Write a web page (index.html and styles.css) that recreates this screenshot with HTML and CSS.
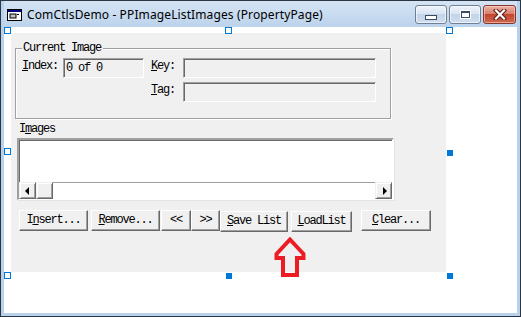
FILE: index.html
```html
<!DOCTYPE html>
<html lang="en">

<head>
    <meta charset="UTF-8">
    <title>ComCtlsDemo - PPImageListImages (PropertyPage)</title>
    <link rel="stylesheet" href="styles.css">
</head>

<body>
    <div class="window">
        <div class="titlebar">
            <svg class="app-icon" width="15" height="12" viewBox="0 0 15 12">
                <rect x="0.5" y="0.5" width="14" height="11" fill="#fff" stroke="#000"/>
                <rect x="1" y="1" width="13" height="2" fill="#000080"/>
                <rect x="3" y="5" width="6" height="4" fill="#c0c0c0" stroke="#000" stroke-width="1"/>
                <rect x="10" y="5" width="2" height="1" fill="#000"/>
            </svg>
            <span class="caption">ComCtlsDemo - PPImageListImages (PropertyPage)</span>
            <div class="caption-buttons">
                <span class="cap-btn"><i class="min-glyph"></i></span>
                <span class="cap-btn"><i class="max-glyph"></i></span>
                <span class="cap-btn close">
                    <svg width="14" height="11" viewBox="0 0 14 11">
                        <path d="M3 1.5 L11 9.5 M11 1.5 L3 9.5" stroke="#5a1a12" stroke-width="4.2" stroke-linecap="square"/>
                        <path d="M3 1.5 L11 9.5 M11 1.5 L3 9.5" stroke="#fff" stroke-width="2.2" stroke-linecap="square"/>
                    </svg>
                </span>
            </div>
        </div>

        <div class="client">
            <div class="page">
                <div class="group">
                    <div class="group-title">Current Image</div>
                    <div class="fields">
                        <span class="lbl"><u>I</u>ndex:</span>
                        <span class="edit">0 of 0</span>
                        <span class="lbl key"><u>K</u>ey:</span>
                        <span class="edit"></span>
                        <span></span>
                        <span></span>
                        <span class="lbl key"><u>T</u>ag:</span>
                        <span class="edit"></span>
                    </div>
                </div>

                <div class="images-label">I<u>m</u>ages</div>
                <div class="listbox">
                    <div class="list-area"></div>
                    <div class="hscroll">
                        <span class="sb-btn"><i class="tri-left"></i></span>
                        <span class="sb-btn thumb"></span>
                        <span class="sb-track"></span>
                        <span class="sb-btn"><i class="tri-right"></i></span>
                    </div>
                </div>

                <div class="btn-row">
                    <span class="btn w-insert">I<u>n</u>sert...</span>
                    <span class="btn w-remove"><u>R</u>emove...</span>
                    <span class="btn w-prev">&lt;&lt;</span>
                    <span class="btn w-next">&gt;&gt;</span>
                    <span class="btn w-save low"><u>S</u>ave List</span>
                    <span class="btn w-load low"><u>L</u>oadList</span>
                    <span class="btn w-clear"><u>C</u>lear...</span>
                </div>
            </div>

            <!-- selection handles of the property page -->
            <span class="handle open h-tl"></span>
            <span class="handle open h-tm"></span>
            <span class="handle open h-tr"></span>
            <span class="handle open h-ml"></span>
            <span class="handle solid h-mr"></span>
            <span class="handle open h-bl"></span>
            <span class="handle solid h-bm"></span>
            <span class="handle solid h-br"></span>

            <svg class="red-arrow" width="32" height="40" viewBox="0 0 32 40">
                <polygon points="16,2.5 29.5,17 29.5,21 23,21 23,38 9,38 9,21 2.5,21 2.5,17" fill="none" stroke="#ed1c24" stroke-width="4"/>
            </svg>
        </div>
    </div>
</body>

</html>
```

FILE: styles.css
```css
body {
    margin: 0;
    background-color: #fff;
    font-family: "Liberation Mono", "Noto Sans CJK SC", monospace;
    font-size: 12px;
    letter-spacing: -1.2px;
    color: #000;
}

.window {
    width: 521px;
    height: 317px;
    box-sizing: border-box;
    border: 1px solid #2b3644;
    background-color: #b9d1ea;
    padding: 0 3px 3px 3px;
    display: flex;
    flex-direction: column;
}

/* title bar */
.titlebar {
    height: 26px;
    flex: none;
    display: flex;
    align-items: flex-start;
    background: linear-gradient(#d5e4f4, #bcd3eb);
}

.app-icon {
    margin: 8px 0 0 3px;
}

.caption {
    margin: 5px 0 0 5px;
    font-family: "Noto Sans", "Open Sans", sans-serif;
    font-size: 12px;
    letter-spacing: 0.12px;
    line-height: 17px;
    color: #000;
}

.caption-buttons {
    margin: 4px 1px 0 auto;
    display: flex;
    gap: 2px;
}

.cap-btn {
    width: 32px;
    height: 19px;
    box-sizing: border-box;
    border: 1px solid #6f7f95;
    border-radius: 3px;
    background: linear-gradient(#eef3fa 0%, #d9e5f3 45%, #c3d4e9 50%, #cfdeef 100%);
    box-shadow: inset 0 0 0 1px rgba(255, 255, 255, 0.6);
    display: flex;
    align-items: center;
    justify-content: center;
}

.cap-btn.close {
    width: 33px;
    border-color: #84362c;
    background: linear-gradient(#eab0a4 0%, #d9806e 45%, #c4462f 50%, #d0684f 100%);
    box-shadow: inset 0 0 0 1px rgba(255, 230, 220, 0.5);
}

.min-glyph {
    width: 10px;
    height: 3px;
    margin-top: 5px;
    background-color: #fff;
    border: 1px solid #3b4a5e;
}

.max-glyph {
    width: 7px;
    height: 4px;
    border: 1px solid #3b4a5e;
    border-top-width: 2px;
    background-color: #fff;
    box-shadow: 0 0 0 1px #fff;
}

/* client area */
.client {
    flex: 1;
    position: relative;
    background-color: #fff;
    padding: 6px 0 0 7px;
}

.page {
    width: 435px;
    height: 239px;
    box-sizing: border-box;
    background-color: #f0f0f0;
    padding-top: 15px;
}

.group {
    margin-left: 4px;
    width: 376px;
    height: 71px;
    box-sizing: border-box;
    border: 1px solid #a0a0a0;
    box-shadow: inset 1px 1px 0 #fff, 1px 1px 0 #fff;
}

.group-title {
    width: fit-content;
    margin: -7px 0 0 6px;
    padding: 0 2px 0 1px;
    height: 12px;
    line-height: 12px;
    background-color: #f0f0f0;
}

.fields {
    margin-top: 4px;
    padding-left: 6px;
    display: grid;
    grid-template-columns: 41px 81px 39px 193px;
    grid-auto-rows: 20px;
    row-gap: 4px;
}

.lbl {
    line-height: 12px;
    padding-top: 2px;
}

.lbl.key {
    padding-left: 7px;
}

.edit {
    box-sizing: border-box;
    height: 20px;
    padding-left: 2px;
    line-height: 18px;
    background-color: #f0f0f0;
    border: 1px solid;
    border-color: #a0a0a0 #fff #fff #a0a0a0;
    box-shadow: inset 1px 1px 0 #696969;
}

.images-label {
    margin: 4px 0 0 8px;
    line-height: 12px;
}

.listbox {
    margin: 3px 0 0 6px;
    width: 377px;
    height: 62px;
    box-sizing: border-box;
    background-color: #fff;
    border-style: solid;
    border-width: 2px 2px 1px 2px;
    border-color: #a0a0a0 #fff #fff #a0a0a0;
    box-shadow: inset 1px 1px 0 #696969, 1px 1px 0 #e3e3e3;
    display: flex;
    flex-direction: column;
}

.list-area {
    flex: 1;
}

.hscroll {
    height: 17px;
    display: flex;
}

.sb-btn {
    width: 17px;
    height: 17px;
    box-sizing: border-box;
    background-color: #f0f0f0;
    border: 1px solid;
    border-color: #f0f0f0 #696969 #696969 #f0f0f0;
    box-shadow: inset 1px 1px 0 #fff, inset -1px -1px 0 #a0a0a0;
    display: flex;
    align-items: center;
    justify-content: center;
}

.sb-track {
    flex: 1;
    background-color: #fff;
    box-shadow: inset 0 1px 0 #a0a0a0;
}

.tri-left {
    width: 0;
    height: 0;
    border-top: 4px solid transparent;
    border-bottom: 4px solid transparent;
    border-right: 4px solid #000;
    margin-right: 2px;
}

.tri-right {
    width: 0;
    height: 0;
    border-top: 4px solid transparent;
    border-bottom: 4px solid transparent;
    border-left: 4px solid #000;
    margin-left: 2px;
}

/* button row */
.btn-row {
    margin: 10px 0 0 8px;
    display: flex;
    align-items: flex-start;
}

.btn {
    height: 21px;
    box-sizing: border-box;
    background-color: #f0f0f0;
    border: 1px solid;
    border-color: #fff #696969 #696969 #fff;
    box-shadow: inset -1px -1px 0 #a0a0a0;
    line-height: 19px;
    text-align: center;
    white-space: nowrap;
}

.btn.low {
    margin-top: 1px;
}

.w-insert { width: 69px; }
.w-remove { width: 69px; margin-left: 3px; }
.w-prev { width: 30px; margin-left: 1px; }
.w-next { width: 29px; }
.w-save { width: 68px; }
.w-load { width: 61px; margin-left: 3px; }
.w-clear { width: 70px; margin-left: 9px; }

/* design-time handles */
.handle {
    position: absolute;
    box-sizing: border-box;
}

.handle.open {
    width: 7px;
    height: 7px;
    border: 1px solid #0078d7;
    background-color: #fff;
}

.handle.solid {
    width: 6px;
    height: 6px;
    background-color: #0078d7;
}

.h-tl { left: 0; top: 0; }
.h-tm { left: 221px; top: 0; }
.h-tr { left: 442px; top: 0; }
.h-ml { left: 0; top: 121px; }
.h-mr { left: 443px; top: 123px; }
.h-bl { left: 0; top: 245px; }
.h-bm { left: 222px; top: 246px; }
.h-br { left: 443px; top: 246px; }

.red-arrow {
    position: absolute;
    left: 270px;
    top: 210px;
}
```
